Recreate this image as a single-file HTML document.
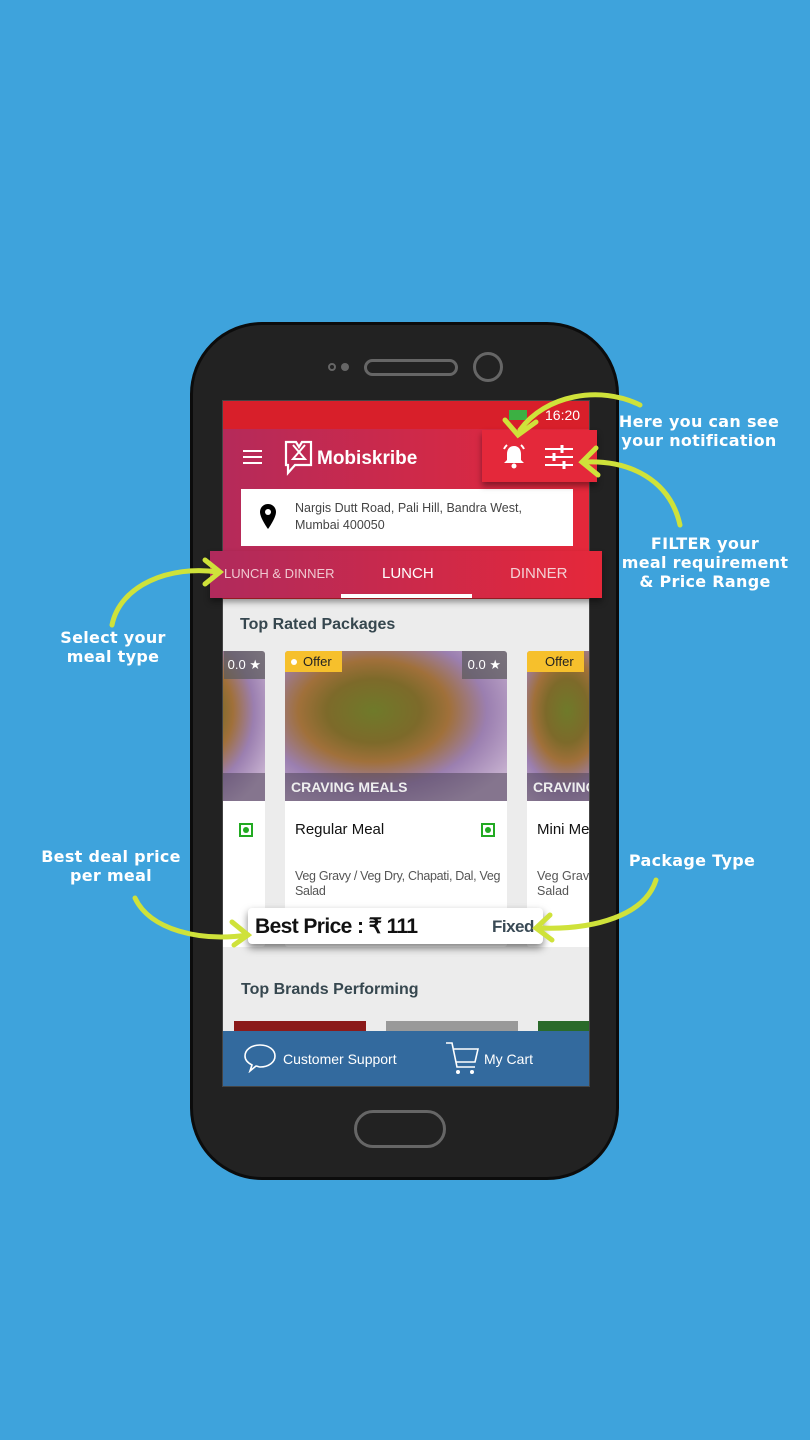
<!DOCTYPE html>
<html><head><meta charset="utf-8"><style>
*{margin:0;padding:0;box-sizing:border-box}
body{width:810px;height:1440px;background:#3ea3dc;position:relative;overflow:hidden;font-family:"Liberation Sans",sans-serif}
.abs{position:absolute}
.phone{left:190px;top:322px;width:429px;height:858px;background:#222;border:3px solid #0c0c0c;border-radius:72px}
.screen{left:222px;top:400px;width:368px;height:687px;background:#ececec;overflow:hidden;border:1px solid #444}
.note{color:#fff;font-family:"DejaVu Sans",sans-serif;font-weight:bold;font-size:16px;line-height:19px;text-align:center;letter-spacing:0.3px}
.card{background:#fff;border-radius:3px;position:absolute;top:250px;height:296px;overflow:hidden}
.img{height:150px;background:radial-gradient(ellipse at 40% 40%,#6f7a2a 0,#7d6a2a 25%,#a0703a 40%,#9b7fb0 60%,#c6b0cf 85%);position:relative}
.cap{position:absolute;left:0;right:0;bottom:0;height:28px;background:rgba(80,70,90,.55);color:#eee;font-weight:bold;font-size:14px;padding:6px 6px}
</style></head><body>
<div class="abs phone"></div>
<div class="abs" style="left:328px;top:363px;width:8px;height:8px;border:2px solid #666;border-radius:50%"></div>
<div class="abs" style="left:341px;top:363px;width:8px;height:8px;background:#666;border-radius:50%"></div>
<div class="abs" style="left:364px;top:359px;width:94px;height:17px;border:3px solid #666;border-radius:9px"></div>
<div class="abs" style="left:473px;top:352px;width:30px;height:30px;border:3px solid #666;border-radius:50%"></div>
<div class="abs" style="left:354px;top:1110px;width:92px;height:38px;border:3px solid #666;border-radius:19px"></div>

<div class="abs screen">
 <div class="abs" style="left:0;top:0;width:368px;height:28px;background:#d81f2a"></div>
 <div class="abs" style="left:286px;top:9px;width:18px;height:10px;background:#3cb043"></div>
 <div class="abs" style="left:322px;top:6px;color:#fff;font-size:14px">16:20</div>
 <div class="abs" style="left:0;top:28px;width:368px;height:124px;background:linear-gradient(90deg,#b52a5a,#e5283a)"></div>
 <div class="abs" style="left:20px;top:49px;width:19px;height:2px;background:#fff;box-shadow:0 6px #fff,0 12px #fff"></div>
 <svg class="abs" style="left:60px;top:38px" width="32" height="40" viewBox="0 0 32 40"><path d="M3 3 L13 3 L16 8 L19 3 L28 3 L28 26 L12 26 L5 34 L5 26 L3 26 Z" fill="none" stroke="#fff" stroke-width="2.2"/><path d="M10 6 L22 20 L10 20 L22 6" fill="none" stroke="#fff" stroke-width="2"/></svg>
 <div class="abs" style="left:94px;top:47px;color:#fff;font-size:19px;font-weight:bold">Mobiskribe</div>
 <div class="abs" style="left:18px;top:88px;width:332px;height:57px;background:#fff"></div>
 <svg class="abs" style="left:36px;top:102px" width="18" height="28" viewBox="0 0 18 28"><path d="M9 1C4 1 1 5 1 9c0 6 8 17 8 17s8-11 8-17C17 5 14 1 9 1z" fill="#000"/><circle cx="9" cy="9" r="3" fill="#fff"/></svg>
 <div class="abs" style="left:72px;top:99px;color:#444;font-size:12.5px;line-height:17px">Nargis Dutt Road, Pali Hill, Bandra West,<br>Mumbai 400050</div>
 <div class="abs" style="left:0;top:152px;width:368px;height:46px;background:#e42a35"></div>
 <div class="abs" style="left:17px;top:215px;color:#36474f;font-size:16px;font-weight:bold">Top Rated Packages</div>
 <div class="card" style="left:-80px;width:122px"><div class="img"><div style="position:absolute;right:0;top:0;background:rgba(90,90,90,.7);color:#fff;font-size:13px;padding:6px 4px">0.0 ★</div><div class="cap"></div></div>
  <div style="position:absolute;right:12px;top:172px;width:14px;height:14px;border:2px solid #2a2;padding:2px"><div style="width:6px;height:6px;background:#2a2;border-radius:50%"></div></div></div>
 <div class="card" style="left:62px;width:222px"><div class="img"><div style="position:absolute;left:0;top:0;background:#f6c02c;color:#222;font-size:13px;padding:3px 10px 3px 18px">Offer</div><div style="position:absolute;left:6px;top:8px;width:6px;height:6px;background:#fff;border-radius:50%"></div><div style="position:absolute;right:0;top:0;background:rgba(90,90,90,.7);color:#fff;font-size:13px;padding:6px 6px">0.0 ★</div><div class="cap">CRAVING MEALS</div></div>
  <div style="position:absolute;left:10px;top:170px;font-size:15px;color:#111">Regular Meal</div>
  <div style="position:absolute;right:12px;top:172px;width:14px;height:14px;border:2px solid #2a2;padding:2px"><div style="width:6px;height:6px;background:#2a2;border-radius:50%"></div></div>
  <div style="position:absolute;left:10px;top:218px;font-size:12.5px;color:#555;line-height:15px;letter-spacing:-0.3px">Veg Gravy / Veg Dry, Chapati, Dal, Veg Salad</div></div>
 <div class="card" style="left:304px;width:100px"><div class="img"><div style="position:absolute;left:0;top:0;background:#f6c02c;color:#222;font-size:13px;padding:3px 10px 3px 18px">Offer</div><div class="cap">CRAVING</div></div>
  <div style="position:absolute;left:10px;top:170px;font-size:15px;color:#111">Mini Meal</div>
  <div style="position:absolute;left:10px;top:218px;font-size:12.5px;color:#555;line-height:15px">Veg Gravy<br>Salad</div></div>
 <div class="abs" style="left:18px;top:580px;color:#36474f;font-size:16px;font-weight:bold">Top Brands Performing</div>
 <div class="abs" style="left:11px;top:620px;width:132px;height:12px;background:#8b1a1a"></div>
 <div class="abs" style="left:163px;top:620px;width:132px;height:12px;background:#999"></div>
 <div class="abs" style="left:315px;top:620px;width:60px;height:12px;background:#2a6a2a"></div>
 <div class="abs" style="left:0;top:630px;width:368px;height:57px;background:#336a9e"></div>
 <svg class="abs" style="left:20px;top:642px" width="34" height="30" viewBox="0 0 34 30"><path d="M17 2C8 2 2 7 2 13c0 4 3 7 7 9l-2 6 6-5c1 0 3 1 4 1 9 0 15-5 15-11S26 2 17 2z" fill="none" stroke="#fff" stroke-width="1.6"/></svg>
 <div class="abs" style="left:60px;top:650px;color:#fff;font-size:14px">Customer Support</div>
 <svg class="abs" style="left:222px;top:640px" width="34" height="36" viewBox="0 0 34 36"><path d="M1 2h6l5 24h18M9 8h24l-3 13H11" fill="none" stroke="#fff" stroke-width="1.6"/><circle cx="13" cy="31" r="2" fill="#fff"/><circle cx="27" cy="31" r="2" fill="#fff"/></svg>
 <div class="abs" style="left:261px;top:650px;color:#fff;font-size:14px">My Cart</div>
</div>
<div class="abs" style="left:482px;top:430px;width:115px;height:52px;background:#e4283a;box-shadow:0 4px 6px rgba(0,0,0,.4)"></div>
<svg class="abs" style="left:500px;top:443px" width="28" height="28" viewBox="0 0 28 28"><path d="M14 3c-5 0-7 4-7 8v6l-3 3h20l-3-3v-6c0-4-2-8-7-8z" fill="#fff"/><circle cx="14" cy="23" r="2.5" fill="#fff"/><path d="M4 6a11 11 0 0 1 3-4M24 6a11 11 0 0 0-3-4" stroke="#fff" stroke-width="2" fill="none"/></svg>
<svg class="abs" style="left:544px;top:444px" width="30" height="26" viewBox="0 0 30 26"><path d="M1 5h28M1 13h28M1 21h28" stroke="#fff" stroke-width="2"/><path d="M18 1v8M10 9v8M20 17v8" stroke="#fff" stroke-width="3"/></svg>
<div class="abs" style="left:210px;top:551px;width:392px;height:47px;background:linear-gradient(90deg,#b02a5c,#e5283a);box-shadow:0 4px 6px rgba(0,0,0,.4)"></div>
<div class="abs" style="left:224px;top:566px;color:#f0c8d0;font-size:13px">LUNCH &amp; DINNER</div>
<div class="abs" style="left:382px;top:565px;color:#fff;font-size:15px">LUNCH</div>
<div class="abs" style="left:510px;top:565px;color:#f4d0d4;font-size:15px">DINNER</div>
<div class="abs" style="left:341px;top:594px;width:131px;height:4px;background:#fff"></div>
<div class="abs" style="left:248px;top:908px;width:295px;height:36px;background:#fff;border-radius:4px;box-shadow:0 4px 8px rgba(0,0,0,.5)"></div>
<div class="abs" style="left:255px;top:914px;font-size:21px;font-weight:bold;color:#111;letter-spacing:-0.6px">Best Price : ₹ 111</div>
<div class="abs" style="left:492px;top:917px;font-size:17px;font-weight:bold;color:#3a4a55;letter-spacing:-0.5px">Fixed</div>
<div class="abs note" style="left:618px;top:412px;width:162px">Here you can see<br>your notification</div>
<div class="abs note" style="left:620px;top:534px;width:170px">FILTER your<br>meal requirement<br>&amp; Price Range</div>
<div class="abs note" style="left:48px;top:628px;width:130px">Select your<br>meal type</div>
<div class="abs note" style="left:30px;top:847px;width:162px">Best deal price<br>per meal</div>
<div class="abs note" style="left:612px;top:851px;width:160px">Package Type</div>
<svg class="abs" style="left:0;top:0" width="810" height="1440">
<g fill="none" stroke="#cfe23a" stroke-width="5" stroke-linecap="round">
<path d="M640 405 C600 385 545 395 520 430"/><path d="M505 420 L518 435 L536 422"/>
<path d="M680 525 C670 480 630 460 585 462"/><path d="M596 448 L582 462 L598 475"/>
<path d="M112 625 C120 585 170 565 218 572"/><path d="M205 560 L220 572 L205 584"/>
<path d="M135 898 C150 930 200 942 248 935"/><path d="M232 922 L248 935 L234 945"/>
<path d="M656 880 C645 915 595 930 540 928"/><path d="M550 915 L536 928 L552 940"/>
</g></svg>
</body></html>
